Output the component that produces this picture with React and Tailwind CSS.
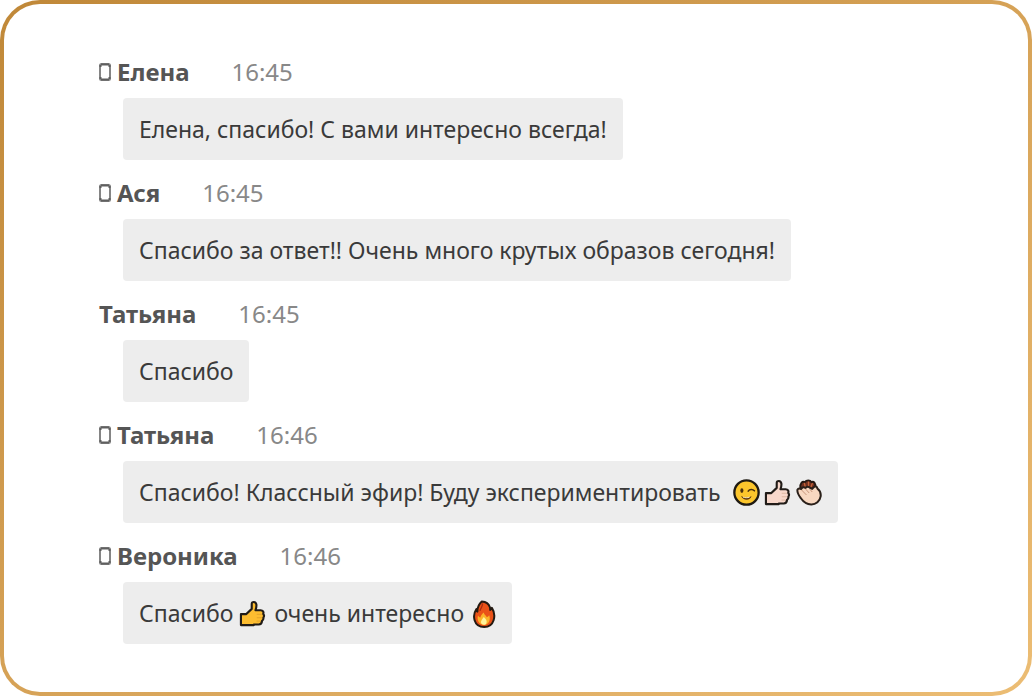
import React from 'react';

function PhoneIcon() {
  return (
    <svg className="w-3 h-5 mr-[6px] shrink-0" viewBox="0 0 12 20" fill="none" aria-hidden="true">
      <rect x="1" y="2" width="10" height="16" rx="1.5" stroke="#858585" strokeWidth="2" />
      <path d="M2 2.5h8M2 17.5h8" stroke="#5f5f5f" strokeWidth="2" />
      <path d="M1.5 3v2M10.5 3v2M1.5 15v2M10.5 15v2" stroke="#5f5f5f" strokeWidth="2" />
    </svg>
  );
}

const emojiClass = 'inline-block w-[27px] h-[27px] -mt-1 align-middle';

function Wink() {
  return (
    <svg className={emojiClass} viewBox="0 0 28 28" role="img" aria-label="wink">
      <circle cx="14" cy="14" r="12.6" fill="#fcc62c" stroke="#1f1a12" strokeWidth="2.4" />
      <ellipse cx="9.2" cy="12" rx="1.6" ry="2.5" fill="#4a300c" />
      <path d="M15.8 12.6c1.4-2.2 4.6-2.3 6.4-.4" fill="none" stroke="#4a300c" strokeWidth="1.7" strokeLinecap="round" />
      <path d="M8.2 17.4c3 2.3 7.6 2.4 11 .2-1.3 5.3-8.6 5.3-11-.2z" fill="#5b3510" />
      <path d="M10.4 18.8c2.3.8 4.4.8 6.8 0" fill="none" stroke="#fff2c4" strokeWidth="1" />
    </svg>
  );
}

function Thumb({ skin }) {
  return (
    <svg className={emojiClass} viewBox="0 0 28 28" role="img" aria-label="thumbs up">
      <path
        d="M2 14.6h5.6l5.6-5.4V3.8c0-2.4 4.2-2.5 4.8.8.3 2.1-.2 4-.9 6h5.4c2.3 0 3.4 1.9 2.6 3.8.9 1.1.9 2.9.2 3.8.2 1.5-.4 2.9-1.4 3.5-.2 2.2-1.5 3.7-3.4 3.7h-5.1V26H2z"
        fill={skin}
        stroke="#211c18"
        strokeWidth="2.2"
        strokeLinejoin="round"
      />
      <path d="M18.4 14.8h5.4M18.4 18.4h5.4M18.2 21.9h4.2" fill="none" stroke="#8a5020" strokeOpacity=".3" strokeWidth=".8" />
    </svg>
  );
}

function Clap() {
  return (
    <svg className={emojiClass} viewBox="0 0 28 28" role="img" aria-label="clapping hands">
      <path d="M5.5 9.5C5 4.5 7.6 2 10.2 3.2 12 .8 15.6.8 17 3.2c2.6-1 4.8 1.6 3.8 5.3L14 12z" fill="#703020" stroke="#241812" strokeWidth="2" />
      <path d="M9.8 4.6l.7 3.2M14 3.2v3.6M17.8 4.8l-1 3" stroke="#c56439" strokeWidth="1.4" strokeLinecap="round" />
      <path
        d="M2.6 11c.8-1.8 2.6-1.2 3.8-.6 1-2 2.8-2.4 4.4-1.2 1.6-1.4 3.6-1.4 5 .1l2 1 2-2.2c1.8-1.2 3.4.2 3.4 1.8 2.8 2.2 3.8 5 3.4 8.1-.8 5.1-4.9 8.5-9.8 8.4-4.2-.1-8-2.5-10.7-6.4-2-2.8-4.3-5.8-3.5-9z"
        fill="#f8d8c1"
        stroke="#2a201a"
        strokeWidth="2.1"
        strokeLinejoin="round"
      />
      <path d="M7 11.6l4.6 4.7M11 10.4l3.4 3.8M15.6 10.8l2 2.4" stroke="#c6947a" strokeWidth="1" strokeLinecap="round" />
    </svg>
  );
}

function Fire() {
  return (
    <svg className="inline-block w-6 h-7 ml-[2px] -mt-1 align-middle" viewBox="0 0 24 28" role="img" aria-label="fire">
      <path
        d="M9.8 1.5c3.4.2 6.9 2 8.1 5.7.3 1 .3 1.8.3 2.8.9-.5 1.4-1.2 1.7-2.1 2.3 3.6 2.9 8.6 1.7 12.4C20.2 24.7 16.6 27 12.2 27 7 27 3.8 24.2 2.6 20.2 1.4 16 2.2 12.3 4.4 9c.2 1.2.5 2 1 2.6C5.3 7.4 7 4 9.8 1.5z"
        fill="#ea5218"
        stroke="#241a12"
        strokeWidth="2"
        strokeLinejoin="round"
      />
      <path d="M10.4 3.5c.8 2.8-1.8 4.4-2.4 7.3" fill="none" stroke="#a82d10" strokeWidth="1.4" />
      <path d="M6 15.5c.6 1.2 1.4 1.8 2.4 2 .4-2.2 1.8-3.4 3.4-4.9.2 2.1 2.3 3 3 4.6.9-.3 1.8-.9 2.4-1.9 1.8 4.6-.5 9.6-5 9.6-5 0-7.6-4.8-6.2-9.4z" fill="#fbb32a" />
      <path d="M11.8 17c2.6 2.6 3.5 4.2 2.6 6.2-1.1 2.3-4.6 2-5.3-.1-.6-2 .9-3.4 2.7-6.1z" fill="#fff39b" />
    </svg>
  );
}

const messages = [
  { name: 'Елена', time: '16:45', mobile: true, body: 'Елена, спасибо! С вами интересно всегда!' },
  { name: 'Ася', time: '16:45', mobile: true, body: 'Спасибо за ответ!! Очень много крутых образов сегодня!' },
  { name: 'Татьяна', time: '16:45', mobile: false, body: 'Спасибо' },
  {
    name: 'Татьяна',
    time: '16:46',
    mobile: true,
    body: (
      <>
        Спасибо! Классный эфир! Буду экспериментировать{' '}
        <span className="inline-flex gap-1 -my-1 ml-[6px] align-middle">
          <Wink />
          <Thumb skin="#f8d8cb" />
          <Clap />
        </span>
      </>
    ),
  },
  {
    name: 'Вероника',
    time: '16:46',
    mobile: true,
    body: (
      <>
        Спасибо <Thumb skin="#fdbd30" />
        <span className="ml-[2px]"> очень интересно </span>
        <Fire />
      </>
    ),
  },
];

function Message({ name, time, mobile, body }) {
  return (
    <li>
      <div className="flex items-center h-7 mb-3 text-2xl leading-7">
        {mobile && <PhoneIcon />}
        <span className="font-bold text-[#555]">{name}</span>
        <time className="ml-[42px] text-[#888]">{time}</time>
      </div>
      <div className="ml-6 w-fit p-4 rounded bg-[#ededed] text-[#3a3a3a] text-[23px] leading-[30px]">{body}</div>
    </li>
  );
}

export default function App() {
  return (
    <div className="min-h-screen flex bg-white">
      <div className="flex-1 flex p-1 rounded-[40px] bg-linear-to-br from-[#c08838] to-[#ecbd74]">
        <main className="flex-1 rounded-[36px] bg-white pl-[95px] pr-24 pt-[54px] pb-10 font-['Noto_Sans',sans-serif]">
          <ul className="space-y-[19px]">
            {messages.map((message, i) => (
              <Message key={i} {...message} />
            ))}
          </ul>
        </main>
      </div>
    </div>
  );
}
